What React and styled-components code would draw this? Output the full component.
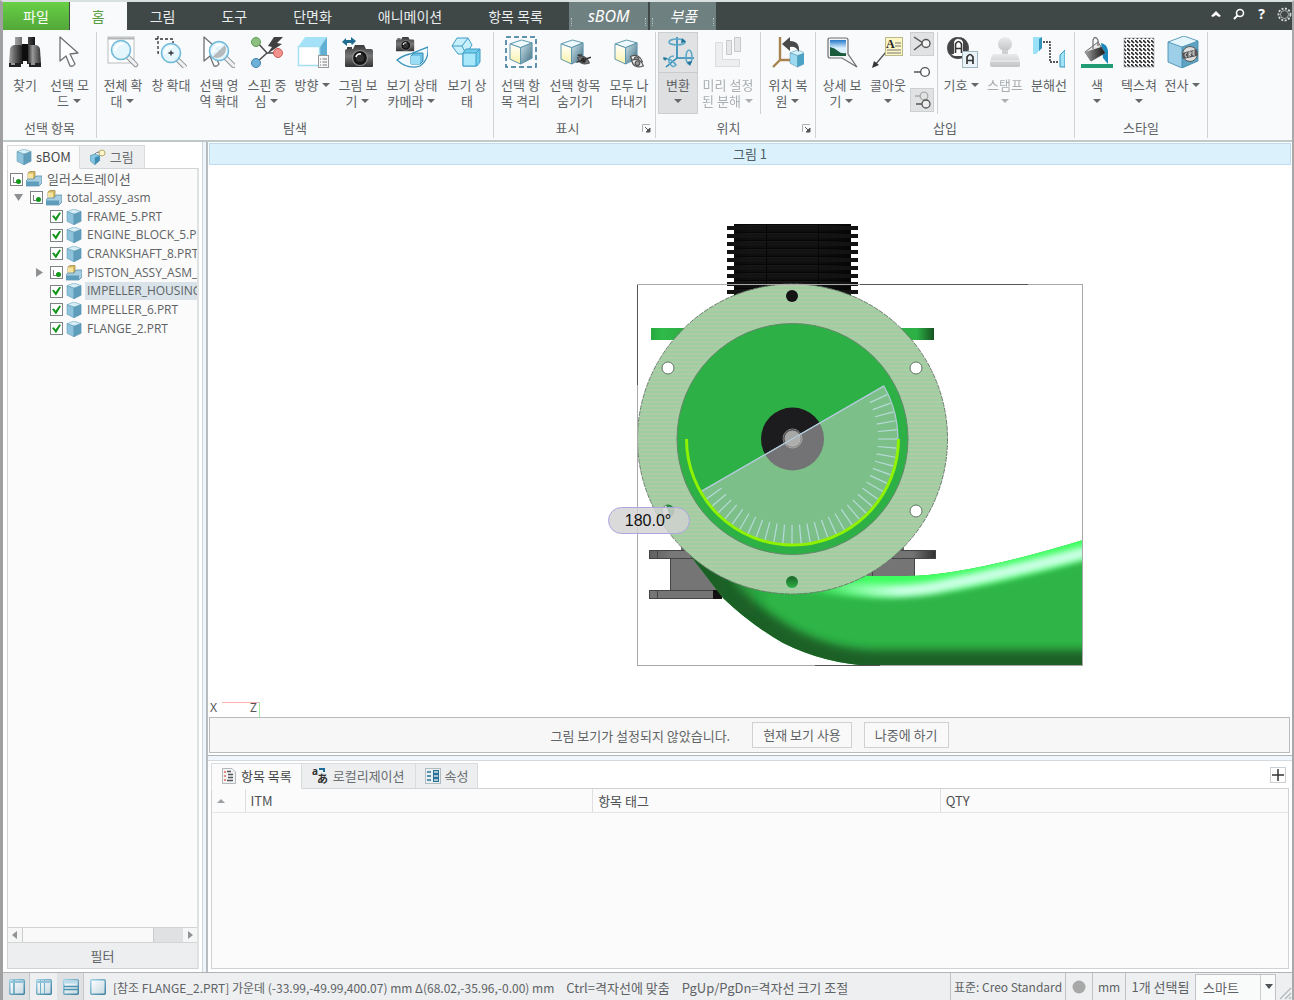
import React from "react";
import styled, { createGlobalStyle, css } from "styled-components";

const Global = createGlobalStyle`
  * { box-sizing: border-box; }
  html, body { margin: 0; padding: 0; }
  body { font-family: "Noto Sans CJK KR", "Noto Sans", sans-serif; font-size: 13px; color: #5f6365; background: #fff; }
  button, input, select { font: inherit; color: inherit; margin: 0; padding: 0; border: 0; border-radius: 0; background: none; }
  svg { display: block; flex: none; }
`;

const Window = styled.div`
  display: flex;
  flex-direction: column;
  min-height: 100vh;
  border-left: 3px solid #a0a0a0;
  border-right: 2px solid #a6a8a9;
  border-top: 2px solid #d9e0e0;
`;

/* ---------- tab bar ---------- */
const TabBar = styled.nav`
  display: flex;
  height: 28px;
  background: #3f4747;
`;
const RibbonTab = styled.button`
  height: 28px;
  padding: 0 23px;
  font-size: 14px;
  line-height: 28px;
  white-space: pre;
  color: #e9eded;
  ${(p) => p.$kind === "file" && css`
    padding: 0 20px;
    color: #fff;
    background: linear-gradient(#68d045, #52a739);
    margin-right: 1px;
  `}
  ${(p) => p.$kind === "home" && css`
    padding: 0 22px;
    color: #58a044;
    background: #f8fafc;
  `}
`;
const ContextTabs = styled.div`
  display: flex;
  gap: 2px;
  margin-left: 3px;
`;
const ContextTab = styled.button`
  position: relative;
  height: 28px;
  padding: 0 19px;
  font: italic ${(p) => p.$size}px/28px "Noto Sans", "Noto Sans CJK KR", sans-serif;
  color: #fff;
  background: #6f8080;
  &::before, &::after {
    content: "";
    position: absolute;
    top: 16px;
    height: 8px;
    border-left: 1px dotted #b5c0c0;
  }
  &::before { left: 2px; }
  &::after { right: 2px; }
`;
const BarTools = styled.div`
  display: flex;
  align-items: center;
  gap: 8px;
  margin-left: auto;
  height: 24px;
`;
const BarTool = styled.button`
  display: grid;
  place-items: center;
  width: 15px;
  height: 20px;
  color: #fff;
  font: bold 14px/20px "Noto Sans", sans-serif;
`;

/* ---------- ribbon ---------- */
const Ribbon = styled.header`
  display: flex;
  height: 112px;
  padding-top: 2px;
  background: #f8fafc;
  border-bottom: 2px solid #c0c9ca;
`;
const Group = styled.section`
  display: flex;
  flex-direction: column;
  height: 106px;
  padding: 0 2px;
  border-right: 1px solid #cfd3d5;
`;
const GroupTools = styled.div`
  display: flex;
  height: 82px;
`;
const GroupName = styled.div`
  display: flex;
  align-items: center;
  justify-content: center;
  position: relative;
  height: 24px;
  padding: 4px ${(p) => (p.$launcher ? 14 : 0)}px 0 0;
  line-height: 16px;
`;
const Launcher = styled.button`
  position: absolute;
  right: 2px;
  top: 10px;
`;
const SubSeparator = styled.div`
  width: 1px;
  margin: 0 2px;
  background: #cfd3d5;
`;
const Tool = styled.button`
  display: flex;
  flex-direction: column;
  align-items: center;
  width: ${(p) => p.$w}px;
  height: 82px;
  padding-top: 4px;
  opacity: ${(p) => (p.disabled ? 0.5 : 1)};
  ${(p) => p.$on && css`
    background: linear-gradient(#e0e2e3 40px, #c9cccd 40px, #c9cccd 41px, #dddfe0 41px);
    box-shadow: inset 0 0 0 1px #cccfd0;
  `}
`;
const ToolText = styled.span`
  margin-top: 9px;
  line-height: 16px;
  text-align: center;
  white-space: pre;
`;
const Caret = styled.i`
  display: inline-block;
  margin: 0 1px 3px ${(p) => (p.$alone ? 1 : 4)}px;
  border: 4px solid transparent;
  border-top: 4px solid #646869;
  border-bottom: 0;
`;
const Stack = styled.div`
  display: flex;
  flex-direction: column;
  justify-content: space-between;
  width: 25px;
  height: 80px;
`;
const MiniTool = styled.button`
  display: grid;
  place-items: center;
  width: 24px;
  height: 24px;
  background: ${(p) => (p.$on ? "#e0e2e3" : "none")};
  box-shadow: ${(p) => (p.$on ? "inset 0 0 0 1px #ccd0d1" : "none")};
`;

/* ---------- work area ---------- */
const Work = styled.div`
  display: flex;
  flex: 1;
  min-height: 0;
`;
const Side = styled.aside`
  display: flex;
  flex-direction: column;
  width: 199px;
  padding: 3px 3px 3px 4px;
  background: #fff;
`;
const Splitter = styled.div`
  width: 6px;
  background: #eff6fb;
  border-left: 1px solid #cdd4d6;
  border-right: 2px solid #b6bcc0;
`;
const TabStrip = styled.div`
  display: flex;
  position: relative;
  height: ${(p) => p.$h}px;
`;
const PanelTab = styled.button`
  display: flex;
  align-items: center;
  gap: 4px;
  padding: 0 ${(p) => p.$pad}px 1px;
  border: 1px solid #d9dcdd;
  border-left-width: ${(p) => (p.$on ? 1 : 0)}px;
  border-bottom-color: ${(p) => (p.$on ? "#fbfbfb" : "#d3d6d8")};
  background: ${(p) => (p.$on ? "#fbfbfb" : "#eceef0")};
  margin-bottom: -1px;
  color: ${(p) => (p.$on ? "#46494a" : "#6b6f71")};
  position: relative;
  white-space: pre;
`;
const TreeBox = styled.div`
  display: flex;
  flex: 1;
  flex-direction: column;
  border: 1px solid #cfd3d4;
  border-right: 2px solid #dfe2e3;
  background: #fbfbfb;
  overflow: hidden;
`;
const Tree = styled.ul`
  display: grid;
  grid-template-rows: repeat(9, 1fr);
  height: 168px;
  margin: 1px 0 0;
  padding: 0;
  list-style: none;
`;
const TreeRow = styled.li`
  display: flex;
  align-items: center;
  padding-left: ${(p) => 2 + 20 * Math.max(0, p.$level - 1)}px;
  min-width: 0;
`;
const Twisty = styled.button`
  display: grid;
  place-items: center;
  width: 18px;
  height: 16px;
  margin-right: 2px;
`;
const Tick = styled.input`
  appearance: none;
  position: relative;
  flex: none;
  width: 13px;
  height: 13px;
  border: 1px solid #7d8284;
  background: #fff;
  &::before {
    content: "";
    position: absolute;
    ${(p) => p.$partial ? css`
      left: 2px; top: 3px; width: 4px; height: 5px;
      border-left: 1px solid #7d8284; border-bottom: 1px solid #7d8284;
    ` : css`
      inset: 1px;
      background: #12961a;
      clip-path: polygon(0 42%, 22% 34%, 40% 58%, 82% 0, 100% 8%, 44% 100%);
    `}
  }
  &::after {
    content: "";
    display: ${(p) => (p.$partial ? "block" : "none")};
    position: absolute;
    left: 5px; top: 5px; width: 5px; height: 5px;
    border-radius: 50%;
    background: #12961a;
  }
`;
const RowLabel = styled.label`
  display: flex;
  align-items: center;
  gap: 3px;
  flex: 1;
  min-width: 0;
  margin-left: 3px;
  white-space: nowrap;
`;
const RowText = styled.span`
  flex: 1;
  padding-left: 2px;
  font-family: "Open Sans", "Noto Sans CJK KR", sans-serif;
  font-size: ${(p) => (p.$ko ? 13 : 12)}px;
  line-height: 18px;
  overflow: hidden;
  background: ${(p) => (p.$on ? "#d9e3e9" : "none")};
`;
const HScroll = styled.div`
  display: flex;
  align-items: center;
  height: 16px;
  margin-top: auto;
  background: #dfe1e3;
  border-top: 1px solid #d2d5d6;
  border-bottom: 1px solid #d2d5d6;
`;
const ScrollButton = styled.button`
  display: grid;
  place-items: center;
  width: 14px;
  height: 14px;
  background: #f6f6f7;
`;
const Thumb = styled.div`
  width: 132px;
  height: 14px;
  margin-right: auto;
  border: solid #c9cccd;
  border-width: 0 1px;
  background: #f9f9f9;
`;
const Filter = styled.button`
  height: 25px;
  background: #eceef0;
`;

const Content = styled.main`
  display: flex;
  flex: 1;
  flex-direction: column;
  min-width: 0;
`;
const FigureTitle = styled.h1`
  margin: 1px 1px 0;
  height: 22px;
  font-size: 13px;
  font-weight: 400;
  line-height: 20px;
  text-align: center;
  color: #4e5d66;
  background: #dbf2fd;
  border: 1px solid #bddcf0;
`;
const Canvas = styled.div`
  flex: 1 1 0;
  min-height: 0;
  background: #fff;
  svg { width: 100%; height: 100%; }
`;
const Notice = styled.div`
  display: flex;
  align-items: center;
  justify-content: center;
  height: 36px;
  margin: 0 2px 2px 1px;
  border: 1px solid #b9bcbd;
  background: #f7f7f7;
`;
const NoticeButton = styled.button`
  height: 26px;
  padding: 0 10px;
  margin-left: ${(p) => (p.$first ? 22 : 12)}px;
  border: 1px solid #cfd1d2;
  background: #f9f9f9;
  line-height: 22px;
`;
const HSplitter = styled.div`
  height: 6px;
  background: #eff7fc;
  border-top: 1px solid #aeb5b9;
  border-bottom: 1px solid #d3d9dc;
`;
const Dock = styled.section`
  display: flex;
  flex-direction: column;
  height: 211px;
  padding: 2px 3px 3px;
`;
const AddButton = styled.button`
  position: absolute;
  right: 3px;
  top: 4px;
  display: grid;
  place-items: center;
  width: 16px;
  height: 16px;
  border: 1px solid #ccd0d2;
  background: #fff;
`;
const TableBox = styled.div`
  flex: 1;
  border: 1px solid #d0d3d4;
  background: #fbfbfb;
`;
const Table = styled.table`
  width: 100%;
  table-layout: fixed;
  border-collapse: collapse;
  th {
    height: 23px;
    padding: 2px 0 0 5px;
    font-weight: 400;
    line-height: 16px;
    text-align: left;
    color: #4d5052;
    border-right: 1px solid #dddfe0;
    border-bottom: 1px solid #e3e5e6;
  }
  th:first-child { width: 33px; }
  th:last-child { border-right: 0; }
`;

/* ---------- status bar ---------- */
const Status = styled.footer`
  display: flex;
  height: 28px;
  background: #edeff1;
  border-top: 1px solid #b0b4b6;
  line-height: 29px;
  white-space: pre;
`;
const ViewButton = styled.button`
  display: grid;
  place-items: center;
  width: 27px;
  height: 27px;
  background: ${(p) => (p.$on ? "#dfe1e3" : "none")};
  box-shadow: ${(p) => (p.$on ? "inset -1px 0 0 #c4c8ca" : "none")};
`;
const Hint = styled.span`
  margin-left: ${(p) => (p.$first ? 2 : 12)}px;
  font-size: ${(p) => (p.$first ? 12 : 13)}px;
`;
const Cells = styled.div`
  display: flex;
  margin-left: auto;
`;
const Cell = styled.div`
  display: flex;
  align-items: center;
  justify-content: center;
  width: ${(p) => p.$w}px;
  height: 27px;
  font-size: ${(p) => (p.$small ? 12 : 13)}px;
  border-left: 1px solid #bfc3c5;
`;
const PickBox = styled.div`
  position: relative;
  height: 27px;
`;
const Pick = styled.select`
  appearance: none;
  width: 81px;
  height: 27px;
  padding: 0 7px;
  border: 1px solid #bfc3c5;
  background: linear-gradient(#c9cccd, #c9cccd) 64px 0 / 1px 100% no-repeat #f9fafa;
  line-height: 25px;
`;
const PickCaret = styled.span`
  position: absolute;
  right: 3px;
  top: 10px;
  line-height: 0;
  pointer-events: none;
`;

/* ---------- drawings ---------- */
const Defs = styled.svg`
  position: absolute;
  width: 0;
  height: 0;
`;
const SharedDefs = () => (
  <Defs aria-hidden="true">
    <defs>
      <linearGradient id="metal" x1="0" x2="1"><stop offset="0" stopColor="#a5a5a5" /><stop offset=".4" stopColor="#666" /><stop offset="1" stopColor="#151515" /></linearGradient>
      <linearGradient id="metalR" x1="1" x2="0"><stop offset="0" stopColor="#333" /><stop offset=".6" stopColor="#999" /><stop offset="1" stopColor="#151515" /></linearGradient>
      <linearGradient id="cam" x1="0" y1="0" x2="0" y2="1"><stop offset="0" stopColor="#3a3a3a" /><stop offset=".5" stopColor="#777" /><stop offset="1" stopColor="#333" /></linearGradient>
      <linearGradient id="sunny" x1="0" y1="0" x2="0" y2="1"><stop offset="0" stopColor="#fff" /><stop offset="1" stopColor="#fbf2a8" /></linearGradient>
      <linearGradient id="steel" x1="0" y1="0" x2="1" y2="1"><stop offset="0" stopColor="#cfe4ec" /><stop offset="1" stopColor="#3c6c7f" /></linearGradient>
      <linearGradient id="sky" x1="0" y1="0" x2="0" y2="1"><stop offset="0" stopColor="#2479c8" /><stop offset=".5" stopColor="#d8efff" /><stop offset="1" stopColor="#e5f4ff" /></linearGradient>
      <linearGradient id="pane" x1="0" y1="0" x2="1" y2="1"><stop offset="0" stopColor="#fff" /><stop offset="1" stopColor="#c6d8e1" /></linearGradient>
      <linearGradient id="paneEdge" x1="0" y1="0" x2="1" y2="1"><stop offset="0" stopColor="#9fd0e6" /><stop offset="1" stopColor="#3d809f" /></linearGradient>
      <linearGradient id="stamp" x1="0" y1="0" x2="0" y2="1"><stop offset="0" stopColor="#ddd" /><stop offset="1" stopColor="#8f8f8f" /></linearGradient>
    </defs>
  </Defs>
);

const Pic = ({ size = 32, w, children }) => (
  <svg width={w || size} height={size} viewBox={`0 0 ${w || size} ${size}`} fill="none" aria-hidden="true">{children}</svg>
);
const Cube = ({ x, y, s, top = "#d6edf6", left = "#8fc3db", right = "#5f9dbb", line = "#4f90ad" }) => (
  <g transform={`translate(${x} ${y}) scale(${s})`} stroke={line} strokeWidth={0.5 / s} strokeLinejoin="round">
    <path d="M0 3L8 0L16 3L8 6Z" fill={top} />
    <path d="M0 3L8 6V18L0 14Z" fill={left} />
    <path d="M16 3L8 6V18L16 14Z" fill={right} />
  </g>
);
const Lens = ({ x, y, r }) => (
  <g>
    <path d={`M${x + r * 0.7} ${y + r * 0.7}L${x + r * 0.7 + 8} ${y + r * 0.7 + 8}`} stroke="#8e9496" strokeWidth="5" strokeLinecap="round" />
    <path d={`M${x + r * 0.7} ${y + r * 0.7}L${x + r * 0.7 + 8} ${y + r * 0.7 + 8}`} stroke="#f0f1f2" strokeWidth="3" strokeLinecap="round" />
    <circle cx={x} cy={y} r={r} fill="#e3f5fd" fillOpacity=".92" stroke="#6fb9d8" strokeWidth="1.600" />
    <path d={`M${x - r * 0.6} ${y + r * 0.1}A${r * 0.65} ${r * 0.65} 0 0 1 ${x + r * 0.2} ${y - r * 0.6}`} stroke="#fff" strokeWidth="2" />
  </g>
);
const Pointer = ({ x = 0 }) => (
  <path d={`M${x} 1V25L${x + 6} 20L${x + 10} 30Q${x + 13} 31 ${x + 15} 28L${x + 10} 18L${x + 18} 17Z`} fill="#fff" stroke="#6e7274" strokeWidth="1.3" strokeLinejoin="round" />
);
const Camera = ({ x, y, s }) => (
  <g transform={`translate(${x} ${y}) scale(${s})`}>
    <path d="M0 6Q0 4 2 4H8L10 0H19L21 4H26Q28 4 28 6V21Q28 22 27 22H1Q0 22 0 21Z" fill="url(#cam)" />
    <rect x="2" y="2" width="5" height="2" fill="#444" />
    <circle cx="15" cy="13" r="7.5" fill="#161616" stroke="#8e8e8e" strokeWidth="1.2" />
    <circle cx="15" cy="13" r="4" fill="#333" />
    <path d="M11 12A4 4 0 0 1 16 9" stroke="#fff" strokeWidth="1.6" />
  </g>
);
const SunCube = ({ x = 0, y = 0, s = 1 }) => (
  <g transform={`translate(${x} ${y}) scale(${s})`} stroke="#5b93aa" strokeWidth="1" strokeLinejoin="round">
    <path d="M0 4L12 0L23 3L11 8Z" fill="#eef9fd" />
    <path d="M0 4L11 8V25L0 20Z" fill="url(#sunny)" />
    <path d="M23 3L11 8V25L23 19Z" fill="url(#steel)" />
  </g>
);
const Eye = ({ x, y, off }) => (
  <g transform={`translate(${x} ${y}) rotate(25 6 4)`}>
    <path d="M0 4Q6 -3 13 4Q6 11 0 4Z" fill={off ? "#777" : "#eceded"} stroke="#555" strokeWidth="1.2" />
    <circle cx="6.5" cy="4" r="2.3" fill={off ? "#222" : "#999"} stroke="#444" />
    {off && <path d="M1 9L12 -2M-1 2L3 0" stroke="#333" strokeWidth="1.5" />}
  </g>
);

const icons = {
  find: <Pic>
    <path d="M6 1H13V9H6ZM19 1H26V9H19Z" fill="url(#metal)" />
    <path d="M0 28L1 13Q2 9 6 9H12Q14 9 14 12V28Z" fill="url(#metal)" />
    <path d="M32 28L31 13Q30 9 26 9H20Q18 9 18 12V28Z" fill="url(#metalR)" />
    <path d="M13 8H19V25H13Z" fill="#0e0e0e" /><path d="M0 27H12V31H0ZM20 27H32V31H20Z" fill="#222" />
    <path d="M2 28H6M22 28H26" stroke="#bbb" strokeWidth="1.500" />
  </Pic>,
  select: <Pic><Pointer x={6} /></Pic>,
  fit: <Pic>
    <rect x="1" y="1" width="26" height="26" fill="#fff" stroke="#b9bcbd" /><path d="M1 2.500H27" stroke="#b0b3b4" strokeWidth="2" />
    <Lens x={14} y={14} r={9.500} />
  </Pic>,
  zoom: <Pic>
    <path d="M0 3H18V7M3 0V17H7" stroke="#333" strokeWidth="1.3" strokeDasharray="3 2" />
    <Lens x={16} y={17} r={9.500} /><path d="M13.500 17H18.500M16 14.500V19.500" stroke="#333" strokeWidth="1.3" />
  </Pic>,
  zoomSel: <Pic><Pointer x={1} /><Lens x={16} y={15} r={9.500} /><path d="M9.500 21L22 9A9 9 0 0 1 10 21Z" fill="#b6babc" /></Pic>,
  spin: <Pic>
    <path d="M5 5L16 17L28 17M16 17L5 27" stroke="#4c4c4c" strokeWidth="1.6" />
    <path d="M23 1H32L26 7L31 8L16 18L21 11L17 10Z" fill="#404040" />
    <circle cx="5" cy="6" r="4.500" fill="#8cbf80" stroke="#5c9a54" /><circle cx="27" cy="17" r="4.500" fill="#f2938d" stroke="#d05b57" /><circle cx="5" cy="27" r="4.500" fill="#6fb0d6" stroke="#3c80ab" />
  </Pic>,
  orient: <Pic>
    <path d="M1 11L8 1H30L23 11Z" fill="#a5e2f8" /><path d="M23 11L30 1V21L23 30Z" fill="#5fb0d2" /><rect x="1.500" y="10.500" width="21" height="19" fill="#fff" stroke="#a5dff4" strokeWidth="1.500" />
    <rect x="21.500" y="19.500" width="10" height="12" fill="#f7f7f7" stroke="#999" /><path d="M23 23H24M23 26H24M23 29H24M25.500 23H30M25.500 26H30M25.500 29H30" stroke="#777" />
  </Pic>,
  shot: <Pic>
    <Camera x={3} y={9} s={1} />
    <path d="M0 6L4 2V4H9L9 1L14 5L10 9L9 7H5V10Z" fill="#216d92" />
  </Pic>,
  stateCam: <Pic>
    <path d="M1 24Q8 19 14 18L32 11Q33 24 24 30Q12 34 1 24Z" fill="#f2fafd" stroke="#3b94bd" strokeWidth="1.3" />
    <Camera x={0} y={1} s={0.65} /><path d="M15 20L18 17H27V25L24 28H15Z" fill="#6cc0e3" stroke="#2f8cb6" /><path d="M15 20H24V28H15Z" fill="#9bddf4" />
  </Pic>,
  state: <Pic>
    <g stroke="#3d9cc6" strokeLinejoin="round" strokeWidth="1"><path d="M1 10L6 2H17L21 9L15 18H7Z" fill="#c8effc" /><path d="M1 10H11L17 2M11 10L15 18" fill="none" />
      <path d="M12 17L15 13H29V26L26 30H12Z" fill="#72cdec" /><path d="M12 17H25V30H12Z" fill="#a9e8fa" /><path d="M25 17L29 13" /></g>
  </Pic>,
  isolate: <Pic><rect x="1" y="1" width="30" height="30" stroke="#2f7197" strokeWidth="1.500" strokeDasharray="5 3" /><SunCube x={5} y={4} s={0.96} /></Pic>,
  hide: <Pic><SunCube x={2} y={4} s={0.96} /><Eye x={18} y={20} off /></Pic>,
  show: <Pic><SunCube x={2} y={4} s={0.96} /><Eye x={17} y={19} /><Eye x={18} y={23} /></Pic>,
  move: <Pic>
    <g stroke="#2586b3" strokeWidth="1.600"><path d="M15 1V22H32M15 22L4 31" /><ellipse cx="15" cy="6" rx="8" ry="3" stroke="#5ea9c9" /><ellipse cx="27" cy="21" rx="3" ry="7" stroke="#5ea9c9" /><path d="M1 23Q8 21 14 29Q10 33 7 26Q6 20 12 20" stroke="#5ea9c9" /></g>
    <path d="M20 2L24 6L19 7ZM25 26L28 30L30 25ZM1 21L5 22L3 25Z" fill="#1f7196" />
  </Pic>,
  preset: <Pic>
    <path d="M3.500 6.500H10.500V23.500H27.500V30.500H3.500Z" fill="#e4e4e4" stroke="#bdbdbd" /><path d="M14.500 4.500H19.500V18.500H14.500ZM22.500 1.500H28.500V15.500H22.500Z" fill="#d4d4d4" stroke="#999" />
  </Pic>,
  restore: <Pic>
    <path d="M8 1V24H18M8 24L1 31" stroke="#a9834f" strokeWidth="2.4" />
    <Cube x={18} y={14} s={0.95} top="#d3f1fb" left="#9bdaf1" right="#4ba3c6" />
    <path d="M10 8L18 1V5Q28 5 27 16Q24 10 18 11V15Z" fill="#4a4a4a" />
  </Pic>,
  detail: <Pic>
    <path d="M4 2H20Q22 2 22 4V18L31 31L16 22H4Q2 22 2 20V4Q2 2 4 2Z" fill="#f5f5f5" stroke="#6c6f70" strokeWidth="1.2" />
    <rect x="4" y="4" width="16" height="16" fill="url(#sky)" /><path d="M4 11Q9 12 12 15T20 17V20H4Z" fill="#1a5b3d" />
  </Pic>,
  callout: <Pic>
    <path d="M14 16L3 29" stroke="#555" strokeWidth="1.3" /><path d="M0 32L2 25L7 29Z" fill="#333" />
    <rect x="13.500" y="1.500" width="17" height="18" fill="#fbf6c4" stroke="#bcb88c" />
    <path d="M23 7H29M23 10H29M15 14H29M15 17H29" stroke="#777" />
    <text x="14" y="12" fontFamily="Liberation Serif, serif" fontWeight="bold" fontSize="12" fill="#222">A</text>
  </Pic>,
  symbol: <Pic>
    <circle cx="12" cy="12" r="10" fill="#fff" stroke="#555" strokeWidth="2" /><path d="M3 7Q6 2 11 1L8 6V18H3Q1 12 3 7ZM14 1Q22 3 22 12L20 17H17V6ZM5 20H19Q12 25 5 20Z" fill="#444" />
    <path d="M9.500 17V8Q12.500 3 15.500 8V17M10 12.500H15" stroke="#333" strokeWidth="1.600" />
    <rect x="16.500" y="15.500" width="15" height="16" fill="#eaf3f7" stroke="#9fb6c0" /><path d="M21 28V21Q24 16 27 21V28M21 24.500H27" stroke="#333" strokeWidth="1.700" />
  </Pic>,
  stamp: <Pic>
    <circle cx="16" cy="8" r="7" fill="url(#stamp)" /><path d="M13 14H19V20H13Z" fill="#aaa" /><path d="M3 20Q3 18 6 18H26Q29 18 29 20L31 25V30Q31 31 29 31H3Q1 31 1 29V25Z" fill="url(#stamp)" /><path d="M1 25H31" stroke="#eee" />
  </Pic>,
  explode: <Pic>
    <path d="M0 1H9V12L3 18H0Z" fill="#9be1f7" /><path d="M6 3L9 1V12L6 15Z" fill="#3493b9" />
    <path d="M10 6H17V26H26" stroke="#222" strokeWidth="1.400" strokeDasharray="2 1" /><path d="M32 14L27 19V31H32Z" fill="#a0e2f7" stroke="#3493b9" />
  </Pic>,
  color: <Pic>
    <path d="M20 7Q26 8 27 15V28L22 22Z" fill="#1988bd" /><path d="M4 16L17 6L24 17L10 25Z" fill="#e8e8e8" stroke="#666" /><path d="M4 16L10 25L24 17L20 11Z" fill="url(#metal)" />
    <path d="M12 13V4Q14 -1 17 4V10" stroke="#777" strokeWidth="1.3" /><rect y="28" width="32" height="4" fill="#229c72" />
  </Pic>,
  texture: <Pic>
    <defs><pattern id="hatch" width="4" height="4" patternUnits="userSpaceOnUse"><path d="M0 0L3 3" stroke="#222" strokeWidth="1.6" /></pattern></defs>
    <rect x="1" y="2" width="30" height="29" fill="#fff" /><rect x="1" y="2" width="30" height="29" fill="url(#hatch)" stroke="#aaa" strokeWidth=".6" />
  </Pic>,
  decal: <Pic>
    <path d="M1 6L17 0L31 5L15 11Z" fill="#e4f6fc" /><path d="M1 6L15 11V32L1 26Z" fill="#9dd0e8" /><path d="M31 5L15 11V32L31 25Z" fill="#5fa3c4" />
    <path d="M1 6L17 0L31 5V25L15 32L1 26ZM1 6L15 11L31 5M15 11V32" stroke="#3a86aa" strokeWidth=".8" />
    <circle cx="23" cy="18" r="7.500" fill="#ddd" stroke="#555" /><path d="M15 17L30 13V20L16 23Z" fill="#555" />
    <path d="M20 17Q18 17 18 19T20 21M22 21V16H24V18H22L24 20M28 15H26V19H28M26 17H28" stroke="#eee" strokeWidth=".8" />
  </Pic>,
};

const BlueCube = () => <Pic size={16}><Cube x={1} y={0} s={0.88} /></Pic>;
const Assembly = () => (
  <Pic size={16}>
    <path d="M2 2L4 .5H9V8L7 10H2Z" fill="#d9bc62" stroke="#94803f" strokeWidth=".7" /><path d="M2 2.500H7V9H2Z" fill="#f5e3a0" />
    <path d="M0 10L2 8H8L10 5H16V12L13 15H0Z" fill="#a5cce0" stroke="#4b86a3" strokeWidth=".7" /><path d="M0 10.500H13V15H0Z" fill="#5f9dbd" />
  </Pic>
);

const Button = ({ icon, w, lines, caret, ...rest }) => {
  const alone = lines[lines.length - 1] === "";
  return (
    <Tool $w={w} {...rest}>
      {icons[icon]}
      <ToolText>{lines.join("\n")}{caret && <Caret $alone={alone} />}</ToolText>
    </Tool>
  );
};
const Launch = ({ label }) => (
  <Launcher aria-label={label}><Pic size={9}><path d="M0.500 8V0.500H8" stroke="#aab0b3" /><path d="M3 3L7 7M8 4V8H4Z" stroke="#555" fill="#555" /></Pic></Launcher>
);

const NodeIcon = ({ kind }) => (
  <Pic size={20} w={20}>
    {kind === "split" && <path d="M2 3L11 9L2 16" stroke="#555" strokeWidth="1.5" />}
    {kind === "line" && <path d="M2 10H9" stroke="#555" strokeWidth="1.5" />}
    {kind === "split" && <circle cx="14" cy="9.500" r="4" fill="#f5f5f5" stroke="#555" strokeWidth="1.4" />}
    {kind === "line" && <circle cx="13" cy="10" r="4.400" fill="#fff" stroke="#555" strokeWidth="1.4" />}
    {kind === "double" && <><path d="M3 6H9" stroke="#aaa" strokeWidth="1.5" /><circle cx="12" cy="6" r="3.800" stroke="#aaa" strokeWidth="1.3" /><path d="M4 14H10" stroke="#555" strokeWidth="1.5" /><circle cx="14" cy="14" r="4" fill="#eee" stroke="#555" strokeWidth="1.3" /></>}
  </Pic>
);

const ductPath = "M690 555L723 598Q750 624 783 643Q825 664 873 666H1083V540Q965 576 905 576H868L792 550Z";
const ticks = Array.from({ length: 35 }, (_, i) => -25 + i * 5);
const polar = (r, deg) => [792 + r * Math.cos((deg * Math.PI) / 180), 439 + r * Math.sin((deg * Math.PI) / 180)];

const Model = () => (
  <svg viewBox="208 165 1084 552" preserveAspectRatio="xMidYMid meet" fill="none" role="img" aria-label="그림 1">
    <defs>
      <pattern id="stripes" width="6" height="4" patternUnits="userSpaceOnUse"><rect width="6" height="4" fill="#9dd09f" /><rect width="6" height="2" y="1" fill="#b0c9a9" /></pattern>
      <linearGradient id="block" x1="0" x2="1"><stop offset="0" stopColor="#0d0d0e" /><stop offset=".15" stopColor="#19191b" /><stop offset=".7" stopColor="#19191b" /><stop offset="1" stopColor="#050505" /></linearGradient>
      <linearGradient id="ear" x1="0" x2="1"><stop offset="0" stopColor="#27a83e" /><stop offset=".04" stopColor="#30bb49" /><stop offset=".1" stopColor="#2db045" /><stop offset=".94" stopColor="#2db045" /><stop offset="1" stopColor="#175321" /></linearGradient>
      <linearGradient id="foot" x1="0" x2="1"><stop offset="0" stopColor="#606060" /><stop offset=".08" stopColor="#787878" /><stop offset=".92" stopColor="#737373" /><stop offset="1" stopColor="#303030" /></linearGradient>
      <linearGradient id="hole" x1="0" y1="0" x2="0" y2="1"><stop offset="0" stopColor="#1d6428" /><stop offset="1" stopColor="#2db045" /></linearGradient>
      <linearGradient id="shine" gradientUnits="userSpaceOnUse" x1="820" y1="0" x2="900" y2="0"><stop offset="0" stopColor="#ccffe6" stopOpacity="0" /><stop offset="1" stopColor="#ccffe6" /></linearGradient>
      <linearGradient id="lit" gradientUnits="userSpaceOnUse" x1="770" y1="0" x2="870" y2="0"><stop offset="0" stopColor="#3dff5e" stopOpacity="0" /><stop offset="1" stopColor="#3dff5e" /></linearGradient>
      <linearGradient id="dusk" gradientUnits="userSpaceOnUse" x1="690" y1="0" x2="770" y2="0"><stop offset="0" stopColor="#1a6025" /><stop offset="1" stopColor="#1a6025" stopOpacity="0" /></linearGradient>
      <clipPath id="duct"><path d={ductPath} /></clipPath>
      <filter id="soft" filterUnits="userSpaceOnUse" x="600" y="480" width="600" height="250"><feGaussianBlur stdDeviation="4" /></filter>
      <filter id="soft2" filterUnits="userSpaceOnUse" x="600" y="480" width="600" height="250"><feGaussianBlur stdDeviation="3" /></filter>
    </defs>

    <rect x="734" y="224" width="117" height="75" fill="url(#block)" />
    {Array.from({ length: 9 }, (_, i) => (
      <g key={i}>
        <rect x="727" y={226 + i * 8} width="131" height="4" fill="#131314" />
        <path d={`M735 ${224.5 + i * 8}H850M735 ${231 + i * 8}H850`} stroke="#060606" />
      </g>
    ))}
    <path d="M766.500 224V290M818.500 224V290" stroke="#060606" />
    <rect x="651" y="328" width="283" height="12" fill="url(#ear)" />

    <path d="M681 547H904V552H681Z" fill="#666" />
    <rect x="670.500" y="555" width="244" height="38" fill="#757575" stroke="#444" />
    <path d="M872.500 560V580" stroke="#444" />
    <rect x="649.500" y="550.500" width="286" height="8" fill="url(#foot)" stroke="#444" />
    <path d="M657.500 551V558M928.500 551V558" stroke="#444" />
    <rect x="649.500" y="590.500" width="71" height="8" fill="#757575" stroke="#444" />
    <rect x="713" y="590" width="9" height="9" fill="#111" />
    <path d="M657.500 591V598" stroke="#444" />

    <path d={ductPath} fill="#2fb547" />
    <g clipPath="url(#duct)">
      <path d="M685 550L723 598Q750 624 783 643Q825 666 873 668H1095" stroke="#1a6025" strokeWidth="36" filter="url(#soft)" />
      <path d="M685 550Q735 592 790 606" stroke="url(#dusk)" strokeWidth="44" filter="url(#soft)" />
      <path d="M760 570Q850 588 905 582Q965 580 1095 543" stroke="url(#lit)" strokeWidth="26" filter="url(#soft2)" />
      <path d="M820 584Q895 598 950 584Q1010 572 1095 550" stroke="url(#shine)" strokeWidth="12" filter="url(#soft2)" />
    </g>

    <circle cx="792.500" cy="439" r="155" fill="url(#stripes)" stroke="#6b7d6c" strokeWidth="1" strokeDasharray="5 1" />
    <circle cx="792.500" cy="439" r="115.500" fill="#2db045" stroke="#64886a" strokeWidth="1" />
    <rect x="637.500" y="284.500" width="445" height="381" stroke="#a9a9a9" />
    <path d="M860 284.500H1028M637.500 285V385M815 665.500H880" stroke="#555" />

    <circle cx="792" cy="296" r="6" fill="#141415" />
    <circle cx="668" cy="368" r="6" fill="#fff" stroke="#5f7562" />
    <circle cx="916" cy="368" r="6" fill="#fff" stroke="#5f7562" />
    <circle cx="916" cy="511" r="6" fill="#fff" stroke="#5f7562" />
    <circle cx="668" cy="511" r="6" fill="#fff" stroke="#5f7562" /><path d="M666 505A6 6 0 0 1 670 517Z" fill="#2d8b40" />
    <circle cx="792" cy="582" r="6" fill="url(#hole)" />

    <circle cx="792.500" cy="439" r="31.500" fill="#1c1b1e" />
    <circle cx="792.500" cy="438.500" r="8.500" fill="#a3a3a1" stroke="#555" />
    <circle cx="792.500" cy="438.500" r="9.500" stroke="#999" strokeWidth=".8" />
    <path d={`M${polar(106, -30).join(" ")}A106 106 0 0 1 ${polar(106, 150).join(" ")}Z`} fill="rgba(206,206,206,0.49)" stroke="#b3cdda" strokeWidth="1.2" />
    <circle cx="792.500" cy="438.500" r="7" fill="#aaaaa8" fillOpacity=".7" />
    <path d={`M${polar(106, -30).join(" ")}L${polar(106, 150).join(" ")}`} stroke="#b3cbdc" strokeWidth="1.2" />
    {ticks.filter((t) => t < 150).map((t) => (
      <path key={t} d={`M${polar(86, t).join(" ")}L${polar(105, t).join(" ")}`} stroke="#b5dbd8" strokeWidth="1.2" />
    ))}
    <path d="M686.500 439A106 106 0 0 0 898.500 439" stroke="#8ef200" strokeWidth="3" />

    <rect x="608.500" y="507.500" width="81" height="26" rx="13" fill="#d2d2d2" fillOpacity=".82" stroke="#a9a6e0" />
    <text x="648" y="526" textAnchor="middle" fontFamily="Liberation Sans, sans-serif" fontSize="16" fill="#111">180.0°</text>

    <path d="M222 702.500H259" stroke="#ffb0b0" /><path d="M259.500 702V717" stroke="#a3eda3" />
    <text x="210" y="712" fontFamily="Noto Sans, sans-serif" fontSize="12" fill="#555">X</text>
    <text x="250" y="712" fontFamily="Noto Sans, sans-serif" fontSize="12" fill="#555">Z</text>
  </svg>
);

const parts = [
  { name: "일러스트레이션", level: 0, asm: true, ko: true },
  { name: "total_assy_asm", level: 1, asm: true, twisty: "open" },
  { name: "FRAME_5.PRT", level: 2 },
  { name: "ENGINE_BLOCK_5.PRT", level: 2 },
  { name: "CRANKSHAFT_8.PRT", level: 2 },
  { name: "PISTON_ASSY_ASM_", level: 2, asm: true, twisty: "closed" },
  { name: "IMPELLER_HOUSING", level: 2, on: true },
  { name: "IMPELLER_6.PRT", level: 2 },
  { name: "FLANGE_2.PRT", level: 2 },
];

const PaneIcon = ({ children }) => (
  <Pic size={16}>
    <rect x=".75" y=".75" width="14.500" height="14.500" rx="1" fill="url(#pane)" stroke="url(#paneEdge)" strokeWidth="1.500" />
    {children}
  </Pic>
);

export default function App() {
  return (
    <Window>
      <Global />
      <SharedDefs />
      <TabBar>
        <RibbonTab $kind="file">파일</RibbonTab>
        <RibbonTab $kind="home">홈</RibbonTab>
        {["그림", "도구", "단면화", "애니메이션", "항목 목록"].map((t) => <RibbonTab key={t}>{t}</RibbonTab>)}
        <ContextTabs>
          <ContextTab $size={16}>sBOM</ContextTab>
          <ContextTab $size={15}>부품</ContextTab>
        </ContextTabs>
        <BarTools>
          <BarTool aria-label="리본 최소화"><Pic size={12}><path d="M1 8L6 3L11 8L9 9L6 7L3 9Z" fill="#fff" /></Pic></BarTool>
          <BarTool aria-label="검색"><Pic size={12}><circle cx="7" cy="5" r="3.500" stroke="#fff" strokeWidth="1.600" /><path d="M4.500 7.500L1 11" stroke="#fff" strokeWidth="2" /></Pic></BarTool>
          <BarTool aria-label="도움말">?</BarTool>
          <BarTool aria-label="설정"><Pic size={15}><circle cx="7.500" cy="7.500" r="6" stroke="#d5dada" strokeWidth="1.800" strokeDasharray="2 1.500" /><circle cx="7.500" cy="7.500" r="4" stroke="#c2c8c8" strokeWidth=".8" /></Pic></BarTool>
        </BarTools>
      </TabBar>

      <Ribbon>
        <Group>
          <GroupTools>
            <Button icon="find" w={40} lines={["찾기"]} />
            <Button icon="select" w={49} lines={["선택 모", "드"]} caret />
          </GroupTools>
          <GroupName>선택 항목</GroupName>
        </Group>
        <Group>
          <GroupTools>
            <Button icon="fit" w={48} lines={["전체 확", "대"]} caret />
            <Button icon="zoom" w={48} lines={["창 확대"]} />
            <Button icon="zoomSel" w={48} lines={["선택 영", "역 확대"]} />
            <Button icon="spin" w={48} lines={["스핀 중", "심"]} caret />
            <Button icon="orient" w={44} lines={["방향"]} caret />
            <Button icon="shot" w={46} lines={["그림 보", "기"]} caret />
            <Button icon="stateCam" w={62} lines={["보기 상태", "카메라"]} caret />
            <Button icon="state" w={48} lines={["보기 상", "태"]} />
          </GroupTools>
          <GroupName>탐색</GroupName>
        </Group>
        <Group>
          <GroupTools>
            <Button icon="isolate" w={49} lines={["선택 항", "목 격리"]} />
            <Button icon="hide" w={60} lines={["선택 항목", "숨기기"]} />
            <Button icon="show" w={48} lines={["모두 나", "타내기"]} />
          </GroupTools>
          <GroupName $launcher>표시<Launch label="표시 옵션" /></GroupName>
        </Group>
        <Group>
          <GroupTools>
            <Button icon="move" w={40} lines={["변환", ""]} caret $on />
            <Button icon="preset" w={60} lines={["미리 설정", "된 분해"]} caret disabled />
            <SubSeparator />
            <Button icon="restore" w={50} lines={["위치 복", "원"]} caret />
          </GroupTools>
          <GroupName $launcher>위치<Launch label="위치 옵션" /></GroupName>
        </Group>
        <Group>
          <GroupTools>
            <Button icon="detail" w={48} lines={["상세 보", "기"]} caret />
            <Button icon="callout" w={44} lines={["콜아웃", ""]} caret />
            <Stack>
              <MiniTool $on aria-label="분기 지시선"><NodeIcon kind="split" /></MiniTool>
              <MiniTool aria-label="단일 지시선"><NodeIcon kind="line" /></MiniTool>
              <MiniTool $on aria-label="이중 지시선"><NodeIcon kind="double" /></MiniTool>
            </Stack>
            <SubSeparator />
            <Button icon="symbol" w={44} lines={["기호"]} caret />
            <Button icon="stamp" w={42} lines={["스탬프", ""]} caret disabled />
            <Button icon="explode" w={46} lines={["분해선"]} />
          </GroupTools>
          <GroupName>삽입</GroupName>
        </Group>
        <Group>
          <GroupTools>
            <Button icon="color" w={40} lines={["색", ""]} caret />
            <Button icon="texture" w={44} lines={["텍스쳐", ""]} caret />
            <Button icon="decal" w={44} lines={["전사"]} caret />
          </GroupTools>
          <GroupName>스타일</GroupName>
        </Group>
      </Ribbon>

      <Work>
        <Side>
          <TabStrip $h={23}>
            <PanelTab $on $pad={8}><BlueCube />sBOM</PanelTab>
            <PanelTab $pad={10}><Pic size={16}><circle cx="12" cy="4" r="3" fill="#fdf5c9" stroke="#b8a96a" /><path d="M5 5Q6 3 9 3" stroke="#777" /><g transform="translate(0 5) scale(.6)"><path d="M0 3L8 0L16 3V11L8 18L0 11Z" fill="#85c7e2" stroke="#3c86a6" /><path d="M8 6V18L16 11V3Z" fill="#3f8db2" /></g></Pic>그림</PanelTab>
          </TabStrip>
          <TreeBox>
            <Tree>
              {parts.map((p, i) => (
                <TreeRow key={p.name} $level={p.level}>
                  {p.level > 0 && (
                    <Twisty aria-label="펼치기" disabled={!p.twisty}>
                      {p.twisty && <Pic size={10}><path d={p.twisty === "open" ? "M0 1H9L4.500 8Z" : "M2 0V9L9 4.500Z"} fill="#8d9193" /></Pic>}
                    </Twisty>
                  )}
                  <Tick type="checkbox" id={`part-${i}`} defaultChecked $partial={p.asm} />
                  <RowLabel htmlFor={`part-${i}`}>
                    {p.asm ? <Assembly /> : <BlueCube />}
                    <RowText $on={p.on} $ko={p.ko}>{p.name}</RowText>
                  </RowLabel>
                </TreeRow>
              ))}
            </Tree>
            <HScroll>
              <ScrollButton aria-label="왼쪽으로"><Pic size={8}><path d="M6 0V8L1 4Z" fill="#909496" /></Pic></ScrollButton>
              <Thumb />
              <ScrollButton aria-label="오른쪽으로"><Pic size={8}><path d="M2 0V8L7 4Z" fill="#909496" /></Pic></ScrollButton>
            </HScroll>
            <Filter>필터</Filter>
          </TreeBox>
        </Side>
        <Splitter />
        <Content>
          <FigureTitle>그림 1</FigureTitle>
          <Canvas><Model /></Canvas>
          <Notice>
            그림 보기가 설정되지 않았습니다.
            <NoticeButton $first>현재 보기 사용</NoticeButton>
            <NoticeButton>나중에 하기</NoticeButton>
          </Notice>
          <HSplitter />
          <Dock>
            <TabStrip $h={25}>
              <PanelTab $on $pad={9}><Pic size={16}><path d="M1.500 .5H11L14.500 4V15.500H1.500Z" fill="#f1f2f3" stroke="#b5b8ba" /><path d="M3 4H5M3 8H5M3 12H5" stroke="#e36a5c" strokeWidth="1.300" /><path d="M6 3.500H10M7 6.500H12M7 9.500H12M6 12.500H12" stroke="#555" strokeWidth="1.300" /></Pic>항목 목록</PanelTab>
              <PanelTab $pad={10}><Pic size={17}><text x="0" y="8" fontSize="10" fontWeight="bold" fill="#333" fontFamily="Noto Sans, sans-serif">a</text><text x="5" y="16" fontSize="11" fontWeight="bold" fill="#333" fontFamily="Noto Sans CJK JP, sans-serif">あ</text><path d="M7 2H12V5" stroke="#1d6e97" strokeWidth="2" /></Pic>로컬리제이션</PanelTab>
              <PanelTab $pad={9}><Pic size={16}><rect x=".5" y=".5" width="15" height="15" fill="#e8f0f4" stroke="#b2bcc2" /><path d="M2 4H6M2 8H6M2 12H6" stroke="#2c7096" strokeWidth="1.400" /><path d="M8 2H14V14H8Z" fill="#2c7096" /><path d="M9 4H13M9 8H13M9 12H13" stroke="#cfe4ee" strokeWidth="1.500" /></Pic>속성</PanelTab>
              <AddButton aria-label="추가"><Pic size={14}><path d="M7 1V13M1 7H13" stroke="#333" strokeWidth="1.500" /></Pic></AddButton>
            </TabStrip>
            <TableBox>
              <Table>
                <thead>
                  <tr>
                    <th scope="col" aria-label="정렬"><Pic size={8}><path d="M0 6H8L4 2Z" fill="#9b9fa1" /></Pic></th>
                    <th scope="col">ITM</th>
                    <th scope="col">항목 태그</th>
                    <th scope="col">QTY</th>
                  </tr>
                </thead>
              </Table>
            </TableBox>
          </Dock>
        </Content>
      </Work>

      <Status>
        <ViewButton $on aria-label="탐색기"><PaneIcon><path d="M5 1V15" stroke="#5ea0bd" strokeWidth="1.500" /><path d="M1.500 3H15" stroke="#8fc3da" strokeWidth="2" /></PaneIcon></ViewButton>
        <ViewButton aria-label="열"><PaneIcon><path d="M4.500 1V15M8.500 1V15" stroke="#6fb0cb" /><path d="M1.500 3H15" stroke="#8fc3da" strokeWidth="2" /></PaneIcon></ViewButton>
        <ViewButton $on aria-label="행"><PaneIcon><path d="M1.500 3H14.500" stroke="#b9dbe8" strokeWidth="3" /><path d="M1 7.500H15M1 10.500H15" stroke="#4a93b3" strokeWidth="1.500" /></PaneIcon></ViewButton>
        <ViewButton aria-label="전체 화면"><PaneIcon /></ViewButton>
        <Hint $first>[참조 FLANGE_2.PRT] 가운데 (-33.99,-49.99,400.07) mm Δ(68.02,-35.96,-0.00) mm</Hint>
        <Hint>Ctrl=격자선에 맞춤</Hint>
        <Hint>PgUp/PgDn=격자선 크기 조절</Hint>
        <Cells>
          <Cell $w={115} $small>표준: Creo Standard</Cell>
          <Cell $w={27}><Pic size={14}><circle cx="7" cy="7" r="6.500" fill="#a8a8a8" /></Pic></Cell>
          <Cell $w={33} $small>mm</Cell>
          <Cell $w={70}>1개 선택됨</Cell>
          <PickBox>
            <Pick aria-label="선택 필터" defaultValue="스마트"><option>스마트</option></Pick>
            <PickCaret><Pic size={8}><path d="M0 1H8L4 6Z" fill="#4f5355" /></Pic></PickCaret>
          </PickBox>
          <Pic size={27} w={16}><path d="M4 26L15 15M9 26L15 20M13 26L15 24" stroke="#b3b8ba" strokeWidth="1.300" /></Pic>
        </Cells>
      </Status>
    </Window>
  );
}
